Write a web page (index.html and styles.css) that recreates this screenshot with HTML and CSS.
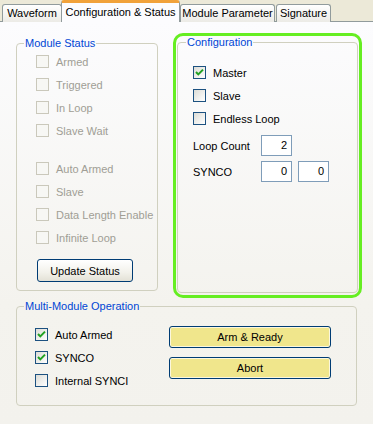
FILE: index.html
```html
<!DOCTYPE html>
<html lang="en">
<head>
  <meta charset="UTF-8">
  <title>Configuration &amp; Status</title>
  <link rel="stylesheet" href="styles.css">
</head>
<body>

  <div class="tabs">
    <div class="tab tab-wave">Waveform</div>
    <div class="tab tab-config active">Configuration &amp; Status</div>
    <div class="tab tab-param">Module Parameter</div>
    <div class="tab tab-sig">Signature</div>
  </div>

  <div class="page">
    <div class="top">

      <fieldset class="group status">
        <legend>Module Status</legend>
        <div class="row off"><span class="box"></span>Armed</div>
        <div class="row off"><span class="box"></span>Triggered</div>
        <div class="row off"><span class="box"></span>In Loop</div>
        <div class="row off"><span class="box"></span>Slave Wait</div>
        <div class="spacer"></div>
        <div class="row off"><span class="box"></span>Auto Armed</div>
        <div class="row off"><span class="box"></span>Slave</div>
        <div class="row off"><span class="box"></span>Data Length Enable</div>
        <div class="row off"><span class="box"></span>Infinite Loop</div>
        <button class="btn update">Update Status</button>
      </fieldset>

      <div class="highlight">
        <fieldset class="group config">
          <legend>Configuration</legend>
          <div class="row"><span class="box checked"></span>Master</div>
          <div class="row"><span class="box"></span>Slave</div>
          <div class="row"><span class="box"></span>Endless Loop</div>
          <div class="field first">
            <span class="label">Loop Count</span>
            <span class="input">2</span>
          </div>
          <div class="field">
            <span class="label">SYNCO</span>
            <span class="input">0</span>
            <span class="input">0</span>
          </div>
        </fieldset>
      </div>

    </div>

    <fieldset class="group multi">
      <legend>Multi-Module Operation</legend>
      <div class="multi-body">
        <div class="checks">
          <div class="row"><span class="box checked"></span>Auto Armed</div>
          <div class="row"><span class="box checked"></span>SYNCO</div>
          <div class="row"><span class="box"></span>Internal SYNCI</div>
        </div>
        <div class="actions">
          <button class="btn yellow">Arm &amp; Ready</button>
          <button class="btn yellow">Abort</button>
        </div>
      </div>
    </fieldset>
  </div>

</body>
</html>
```

FILE: styles.css
```css
body {
  margin: 0;
  width: 373px;
  height: 424px;
  overflow: hidden;
  background-color: #ece9d8;
  color: #000;
  font-family: "Liberation Sans", Arial, sans-serif;
  font-size: 11px;
}

/* tab strip */
.tabs {
  display: flex;
  align-items: flex-end;
  height: 21px;
  padding-left: 2px;
  border-bottom: 1px solid #919b9c;
  position: relative;
}

.tab {
  box-sizing: border-box;
  height: 18px;
  line-height: 16px;
  text-align: center;
  white-space: nowrap;
  border: 1px solid #919b9c;
  border-bottom: none;
  border-radius: 3px 3px 0 0;
  background: linear-gradient(#ffffff, #ecebe6);
  margin-right: 1px;
  margin-bottom: -1px;
}

.tab-wave { width: 60px; margin-right: -1px; }
.tab-config { width: 119px; margin-right: 0; }
.tab-param { width: 95px; }
.tab-sig { width: 55px; }

.tab.active {
  height: 22px;
  line-height: 19px;
  background: #fcfcfe;
  border-top: 3px solid #f1a23a;
  position: relative;
  z-index: 1;
}

/* tab page */
.page {
  height: 402px;
  padding: 11px 0 0 16px;
  box-sizing: border-box;
  background: linear-gradient(#fcfcfe, #f4f3ee 70%, #f3f2ed);
}

.top {
  display: flex;
  align-items: flex-start;
  gap: 15px;
}

.group {
  margin: 0;
  border: 1px solid #d0d0bf;
  border-radius: 4px;
  min-width: 0;
}

legend {
  color: #0046d5;
  padding: 0 1px;
  line-height: 13px;
  white-space: nowrap;
}

.row {
  display: flex;
  align-items: center;
  gap: 7px;
  height: 23px;
  white-space: nowrap;
}

.row.off {
  color: #a09e95;
}

.box {
  box-sizing: border-box;
  width: 13px;
  height: 13px;
  border: 1px solid #1c5180;
  background: linear-gradient(135deg, #dcdcd6, #ffffff);
  flex: none;
}

.row.off .box {
  border-color: #cac8bb;
  background: #f7f7f4;
}

.box.checked {
  background:
    url("data:image/svg+xml,%3Csvg xmlns='http://www.w3.org/2000/svg' width='11' height='11'%3E%3Cpath d='M2 5 L4.3 7.4 L9 2.6' fill='none' stroke='%2321a121' stroke-width='2'/%3E%3C/svg%3E") center/11px 11px no-repeat,
    linear-gradient(135deg, #dcdcd6, #ffffff);
}

/* module status */
.status {
  width: 142px;
  box-sizing: border-box;
  margin-top: 4px;
  padding: 0 0 8px 19px;
}

.status legend {
  margin-left: -12px;
}

.spacer {
  height: 15px;
}

.btn {
  font-family: inherit;
  font-size: 11px;
  color: #000;
  border: 1px solid #003c74;
  border-radius: 3px;
  padding: 0;
}

.update {
  width: 96px;
  height: 23px;
  margin-top: 10px;
  margin-left: 1px;
  background: linear-gradient(#ffffff, #f2f1ea 60%, #e3e1d6);
}

/* configuration (highlighted) */
.highlight {
  width: 189px;
  height: 265px;
  box-sizing: border-box;
  border: 3px solid #66ee22;
  border-radius: 10px;
  padding: 0 1px 2px 1px;
}

.config {
  height: 100%;
  box-sizing: border-box;
  padding: 12px 6px 0 15px;
}

.config legend {
  margin-left: -7px;
}

.field {
  display: flex;
  align-items: center;
  gap: 6px;
  margin-top: 3px;
  height: 23px;
}

.field.first {
  margin-top: 4px;
}

.field .label {
  width: 62px;
}

.input {
  box-sizing: border-box;
  width: 31px;
  height: 21px;
  line-height: 19px;
  border: 1px solid #7f9db9;
  background: #fff;
  text-align: right;
  padding-right: 4px;
}

/* multi module */
.multi {
  width: 341px;
  box-sizing: border-box;
  margin-top: 2px;
  padding: 10px 4px 13px 18px;
}

.multi legend {
  margin-left: -11px;
}

.multi-body {
  display: flex;
}

.checks {
  width: 134px;
}

.actions {
  display: flex;
  flex-direction: column;
  gap: 9px;
  padding-top: 3px;
}

.yellow {
  width: 162px;
  height: 22px;
  background: #f0e68c;
  box-shadow: inset 0 0 0 1px #fbf7dc;
}
```
